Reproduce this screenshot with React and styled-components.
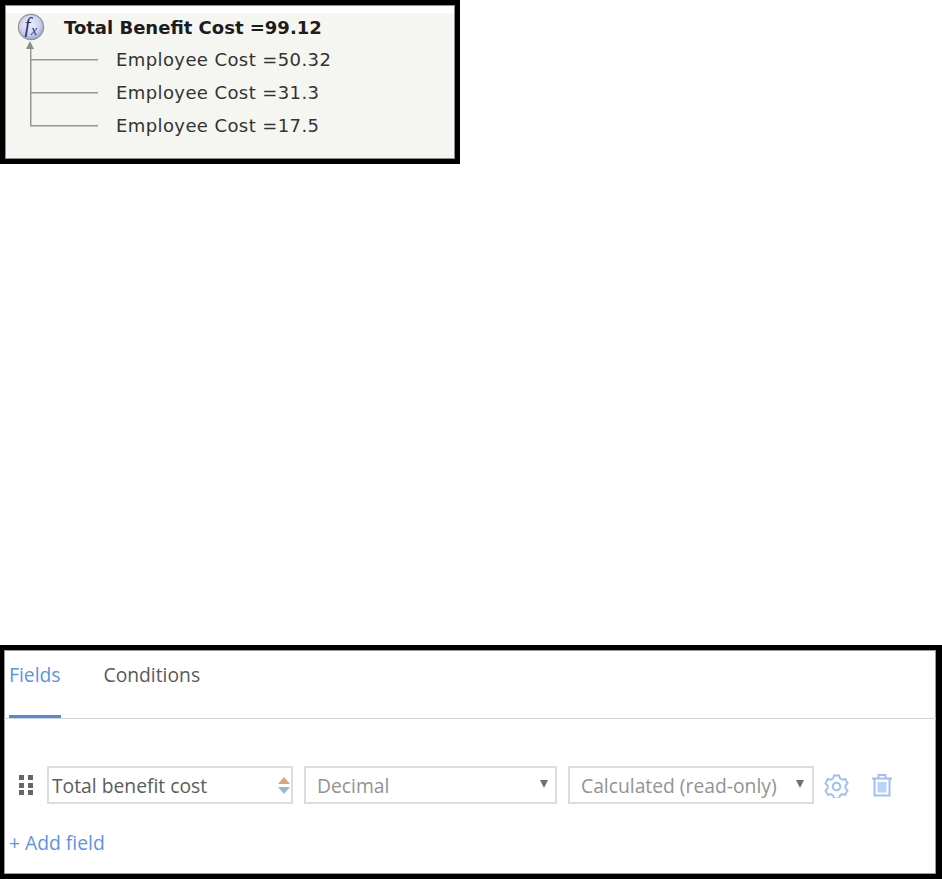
import React from 'react';
import styled, { createGlobalStyle } from 'styled-components';

const GlobalStyle = createGlobalStyle`
  html, body {
    margin: 0;
    padding: 0;
    background: #fff;
  }
`;

const Page = styled.div`
  width: 942px;
  height: 879px;
  display: flex;
  flex-direction: column;
  justify-content: space-between;
  overflow: hidden;
`;

const TreePanel = styled.section`
  box-sizing: border-box;
  width: 460px;
  height: 164px;
  border: 5px solid #000;
  background: #f5f6f2;
  box-shadow: inset 0 0 0 1px #8f8f8f, inset 0 8px 0 #fff;
  padding: 8px 0 0 12px;
  font-family: "DejaVu Sans", Verdana, sans-serif;
  font-size: 18px;
  color: #333;
`;

const RootRow = styled.div`
  display: flex;
  align-items: center;
  height: 28px;
  margin-bottom: 2px;
`;

const FxIcon = styled.svg`
  width: 28px;
  height: 28px;
  flex: none;
`;

const RootLabel = styled.span`
  margin-left: 19px;
  font-weight: 700;
  color: #1c1c1c;
`;

const TreeBody = styled.div`
  margin-left: 13px;
  margin-top: -2px;
`;

const Arrow = styled.div`
  width: 0;
  height: 0;
  margin-left: -4px;
  border-left: 4.5px solid transparent;
  border-right: 4.5px solid transparent;
  border-bottom: 8px solid #8d8d88;
`;

const TreeRow = styled.div`
  display: flex;
  height: 33px;
  align-items: center;
`;

const Connector = styled.span`
  align-self: stretch;
  width: 68px;
  flex: none;
  background:
    linear-gradient(#979792, #979792) left 10px / 100% 1.5px no-repeat,
    linear-gradient(#979792, #979792) left top / 1.5px ${(p) => (p.$last ? '11px' : '100%')} no-repeat;
`;

const ChildLabel = styled.span`
  margin-left: 18px;
  margin-top: -13px;
  letter-spacing: 0.4px;
`;

const FieldsPanel = styled.section`
  box-sizing: border-box;
  width: 942px;
  height: 234px;
  border: 5px solid #000;
  border-left-width: 4px;
  border-right-width: 6px;
  background: #fff;
  box-shadow: inset 0 0 0 1px #9a9a9a;
  font-family: "Open Sans", sans-serif;
  font-size: 19.3px;
  color: #555;
`;

const Tabs = styled.nav`
  display: flex;
  gap: 43px;
  height: 68px;
  padding-left: 5px;
  border-bottom: 1px solid #d4d4d4;
`;

const Tab = styled.a`
  box-sizing: border-box;
  height: 68px;
  padding-top: 12px;
  line-height: 25px;
  color: ${(p) => (p.$active ? '#5b93e8' : '#5a5a5a')};
  border-bottom: 3px solid ${(p) => (p.$active ? '#4f8ae0' : 'transparent')};
`;

const FieldRow = styled.div`
  display: flex;
  align-items: center;
  margin-top: 47px;
  padding-left: 15px;
  height: 38px;
`;

const DragHandle = styled.span`
  display: grid;
  grid-template-columns: repeat(2, 5px);
  grid-auto-rows: 5px;
  gap: 2.5px 4px;
  width: 14px;
  margin-right: 14px;
  flex: none;
`;

const Dot = styled.i`
  background: #666;
`;

const Control = styled.div`
  box-sizing: border-box;
  width: ${(p) => p.$width}px;
  height: 38px;
  margin-right: ${(p) => p.$gap}px;
  flex: none;
  display: flex;
  align-items: center;
  justify-content: space-between;
  padding: ${(p) => p.$pad};
  border: 2px solid #dcdcdc;
  color: ${(p) => (p.$muted ? '#939393' : '#5c5c5c')};
  white-space: nowrap;
`;

const SortCaret = styled.span`
  display: flex;
  flex-direction: column;
  gap: 3px;
  &::before,
  &::after {
    content: '';
    width: 0;
    height: 0;
    border-left: 6.5px solid transparent;
    border-right: 6.5px solid transparent;
  }
  &::before {
    border-bottom: 7px solid #dba67e;
  }
  &::after {
    border-top: 7px solid #93bad3;
  }
`;

const SelectCaret = styled.span`
  width: 0;
  height: 0;
  flex: none;
  margin-bottom: 2px;
  border-left: 4.5px solid transparent;
  border-right: 4.5px solid transparent;
  border-top: 8px solid #707070;
`;

const ToolIcon = styled.svg`
  width: ${(p) => p.$size}px;
  height: ${(p) => p.$size}px;
  flex: none;
  margin-right: ${(p) => p.$gap}px;
  fill: none;
  stroke: #9fc0f6;
  stroke-width: 2;
`;

const AddField = styled.a`
  display: block;
  margin: 26px 0 0 5px;
  line-height: 25px;
  color: #5b93e8;
`;

const employees = ['50.32', '31.3', '17.5'];
const dots = [0, 1, 2, 3, 4, 5];

function App() {
  return (
    <Page>
      <GlobalStyle />
      <TreePanel>
        <RootRow>
          <FxIcon viewBox="0 0 28 28">
            <defs>
              <radialGradient id="fxFill" cx="45%" cy="40%" r="60%">
                <stop offset="0%" stopColor="#eef0fa" />
                <stop offset="65%" stopColor="#cdd3ee" />
                <stop offset="100%" stopColor="#9da5d6" />
              </radialGradient>
            </defs>
            <circle cx="14" cy="14" r="12.6" fill="url(#fxFill)" stroke="#8f9497" strokeWidth="1.2" />
            <text fontFamily="Liberation Serif, serif" fontStyle="italic" fill="#2d2f7f">
              <tspan x="7.5" y="19" fontSize="21">f</tspan>
              <tspan x="14" y="22" fontSize="14">x</tspan>
            </text>
          </FxIcon>
          <RootLabel>Total Benefit Cost =99.12</RootLabel>
        </RootRow>
        <TreeBody>
          <Arrow />
          {employees.map((value, i) => (
            <TreeRow key={value}>
              <Connector $last={i === employees.length - 1} />
              <ChildLabel>Employee Cost ={value}</ChildLabel>
            </TreeRow>
          ))}
        </TreeBody>
      </TreePanel>

      <FieldsPanel>
        <Tabs>
          <Tab $active>Fields</Tab>
          <Tab>Conditions</Tab>
        </Tabs>
        <FieldRow>
          <DragHandle>
            {dots.map((d) => (
              <Dot key={d} />
            ))}
          </DragHandle>
          <Control $width={246} $gap={11} $pad="0 1px 0 3px">
            Total benefit cost
            <SortCaret />
          </Control>
          <Control $width={253} $gap={11} $pad="0 7px 0 11px" $muted>
            Decimal
            <SelectCaret />
          </Control>
          <Control $width={246} $gap={10} $pad="0 8px 0 11px" $muted>
            Calculated (read-only)
            <SelectCaret />
          </Control>
          <ToolIcon viewBox="0 0 24 24" $size={25} $gap={21}>
            <path d="M9.3 2h5.4l.8 3 2.6 1.5 3-.8 2.4 4.6-2.2 2.2v3l2.2 2.2-2.4 4.6-3-.8-2.6 1.5-.8 3H9.3l-.8-3-2.6-1.5-3 .8L.5 17.7l2.2-2.2v-3L.5 10.3l2.4-4.6 3 .8 2.6-1.5z" transform="translate(1 .5) scale(.92)" />
            <circle cx="12" cy="13" r="3.6" />
          </ToolIcon>
          <ToolIcon viewBox="0 0 24 24" $size={24} $gap={0}>
            <path d="M2 5.5h20M8.5 5V2h7v3M4.5 6v16.5h15V6" />
            <rect x="7.5" y="9" width="9" height="10.5" fill="#bcd3f8" stroke="none" />
          </ToolIcon>
        </FieldRow>
        <AddField>+ Add field</AddField>
      </FieldsPanel>
    </Page>
  );
}

export default App;
